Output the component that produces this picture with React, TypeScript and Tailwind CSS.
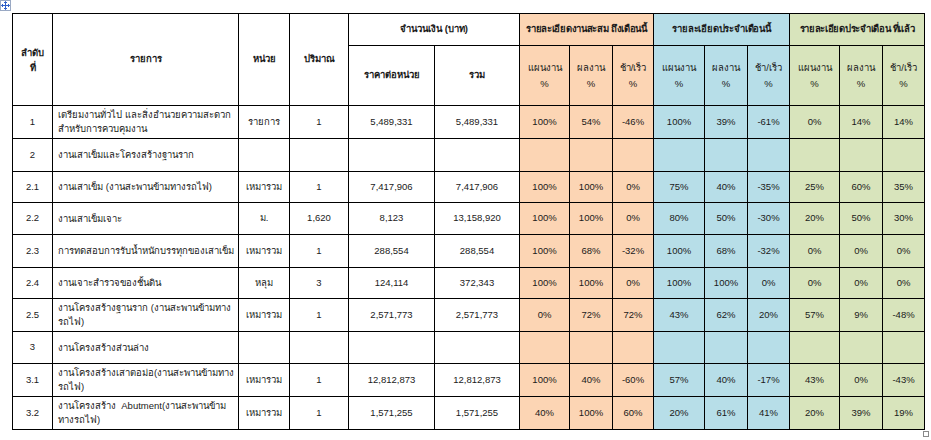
import React from "react"

type Row = {
  no: string
  name: React.ReactNode
  unit?: string
  qty?: string
  price?: string
  total?: string
  a?: string[]
  b?: string[]
  c?: string[]
  h: string
}

const rows: Row[] = [
  {
    no: "1",
    name: (
      <>
        เตรียมงานทั่วไป และสิ่งอำนวยความสะดวก
        <br />
        สำหรับการควบคุมงาน
      </>
    ),
    unit: "รายการ",
    qty: "1",
    price: "5,489,331",
    total: "5,489,331",
    a: ["100%", "54%", "-46%"],
    b: ["100%", "39%", "-61%"],
    c: ["0%", "14%", "14%"],
    h: "h-[33px]",
  },
  { no: "2", name: "งานเสาเข็มและโครงสร้างฐานราก", h: "h-[33px]" },
  {
    no: "2.1",
    name: "งานเสาเข็ม (งานสะพานข้ามทางรถไฟ)",
    unit: "เหมารวม",
    qty: "1",
    price: "7,417,906",
    total: "7,417,906",
    a: ["100%", "100%", "0%"],
    b: ["75%", "40%", "-35%"],
    c: ["25%", "60%", "35%"],
    h: "h-[31px]",
  },
  {
    no: "2.2",
    name: "งานเสาเข็มเจาะ",
    unit: "ม.",
    qty: "1,620",
    price: "8,123",
    total: "13,158,920",
    a: ["100%", "100%", "0%"],
    b: ["80%", "50%", "-30%"],
    c: ["20%", "50%", "30%"],
    h: "h-[32px]",
  },
  {
    no: "2.3",
    name: "การทดสอบการรับน้ำหนักบรรทุกของเสาเข็ม",
    unit: "เหมารวม",
    qty: "1",
    price: "288,554",
    total: "288,554",
    a: ["100%", "68%", "-32%"],
    b: ["100%", "68%", "-32%"],
    c: ["0%", "0%", "0%"],
    h: "h-[33px]",
  },
  {
    no: "2.4",
    name: "งานเจาะสำรวจของชั้นดิน",
    unit: "หลุม",
    qty: "3",
    price: "124,114",
    total: "372,343",
    a: ["100%", "100%", "0%"],
    b: ["100%", "100%", "0%"],
    c: ["0%", "0%", "0%"],
    h: "h-[31px]",
  },
  {
    no: "2.5",
    name: (
      <>
        งานโครงสร้างฐานราก (งานสะพานข้ามทาง
        <br />
        รถไฟ)
      </>
    ),
    unit: "เหมารวม",
    qty: "1",
    price: "2,571,773",
    total: "2,571,773",
    a: ["0%", "72%", "72%"],
    b: ["43%", "62%", "20%"],
    c: ["57%", "9%", "-48%"],
    h: "h-[33px]",
  },
  { no: "3", name: "งานโครงสร้างส่วนล่าง", h: "h-[32px]" },
  {
    no: "3.1",
    name: (
      <>
        งานโครงสร้างเสาตอม่อ(งานสะพานข้ามทาง
        <br />
        รถไฟ)
      </>
    ),
    unit: "เหมารวม",
    qty: "1",
    price: "12,812,873",
    total: "12,812,873",
    a: ["100%", "40%", "-60%"],
    b: ["57%", "40%", "-17%"],
    c: ["43%", "0%", "-43%"],
    h: "h-[33px]",
  },
  {
    no: "3.2",
    name: (
      <>
        งานโครงสร้าง&nbsp; Abutment(งานสะพานข้าม
        <br />
        ทางรถไฟ)
      </>
    ),
    unit: "เหมารวม",
    qty: "1",
    price: "1,571,255",
    total: "1,571,255",
    a: ["40%", "100%", "60%"],
    b: ["20%", "61%", "41%"],
    c: ["20%", "39%", "19%"],
    h: "h-[33px]",
  },
]

const widths = [40, 186, 51, 59, 86, 85, 50, 43, 41, 51, 43, 42, 50, 43, 42]

const cell = "border border-black text-center align-middle p-0"
const orange = "bg-[#fcd5b4]"
const blue = "bg-[#b7dee8]"
const green = "bg-[#d8e4bc]"

function PctHead({ label, bg }: { label: string; bg: string }) {
  return (
    <td className={`${cell} ${bg} leading-[16px]`}>
      {label}
      <br />%
    </td>
  )
}

function Group({ vals, bg }: { vals?: string[]; bg: string }) {
  const v = vals ?? ["", "", ""]
  return (
    <>
      {v.map((x, i) => (
        <td key={i} className={`${cell} ${bg}`}>
          {x}
        </td>
      ))}
    </>
  )
}

export default function App() {
  return (
    <div
      className="relative w-[931px] h-[440px] bg-white text-[#1a1a1a] text-[9.5px] pt-[13px] pl-[12px]"
      style={{ fontFamily: "'Liberation Sans', 'Noto Sans', sans-serif" }}
    >
      {/* move handle */}
      <div className="absolute left-0 top-0 w-[11px] h-[11px] border border-[#9aa9c4] bg-white flex items-center justify-center">
        <svg width="9" height="9" viewBox="0 0 9 9" fill="none" stroke="#2f5fc8" strokeWidth="1">
          <path d="M4.5 0.5v8M0.5 4.5h8" />
          <path d="M3 2l1.5-1.5L6 2M3 7l1.5 1.5L6 7M2 3L0.5 4.5 2 6M7 3l1.5 1.5L7 6" />
        </svg>
      </div>

      <table className="border-collapse table-fixed w-[913px]">
        <colgroup>
          {widths.map((w, i) => (
            <col key={i} style={{ width: w }} />
          ))}
        </colgroup>
        <thead>
          <tr className="h-[32px]">
            <td rowSpan={2} className={`${cell} font-bold leading-[15px]`}>
              ลำดับ
              <br />
              ที่
            </td>
            <td rowSpan={2} className={`${cell} font-bold`}>รายการ</td>
            <td rowSpan={2} className={`${cell} font-bold`}>หน่วย</td>
            <td rowSpan={2} className={`${cell} font-bold`}>ปริมาณ</td>
            <td colSpan={2} className={`${cell} font-bold`}>จำนวนเงิน (บาท)</td>
            <td colSpan={3} className={`${cell} ${orange} font-bold tracking-[-0.3px] whitespace-nowrap`}>
              รายละเอียดงานสะสม ถึงเดือนนี้
            </td>
            <td colSpan={3} className={`${cell} ${blue} font-bold tracking-[-0.2px]`}>รายละเอียดประจำเดือนนี้</td>
            <td colSpan={3} className={`${cell} ${green} font-bold tracking-[-0.3px] whitespace-nowrap`}>
              รายละเอียดประจำเดือน ที่แล้ว
            </td>
          </tr>
          <tr className="h-[60px]">
            <td className={`${cell} font-bold`}>ราคาต่อหน่วย</td>
            <td className={`${cell} font-bold`}>รวม</td>
            <PctHead label="แผนงาน" bg={orange} />
            <PctHead label="ผลงาน" bg={orange} />
            <PctHead label="ช้า/เร็ว" bg={orange} />
            <PctHead label="แผนงาน" bg={blue} />
            <PctHead label="ผลงาน" bg={blue} />
            <PctHead label="ช้า/เร็ว" bg={blue} />
            <PctHead label="แผนงาน" bg={green} />
            <PctHead label="ผลงาน" bg={green} />
            <PctHead label="ช้า/เร็ว" bg={green} />
          </tr>
        </thead>
        <tbody>
          {rows.map((r) => (
            <tr key={r.no} className={r.h}>
              <td className={cell}>{r.no}</td>
              <td className="border border-black text-left align-middle pl-[5px] pr-1 leading-[14px] whitespace-nowrap">
                {r.name}
              </td>
              <td className={cell}>{r.unit}</td>
              <td className={cell}>{r.qty}</td>
              <td className={cell}>{r.price}</td>
              <td className={cell}>{r.total}</td>
              <Group vals={r.a} bg={orange} />
              <Group vals={r.b} bg={blue} />
              <Group vals={r.c} bg={green} />
            </tr>
          ))}
        </tbody>
      </table>

      {/* resize handle */}
      <div className="absolute left-[923px] top-[431px] w-[6px] h-[6px] border border-[#8a8a8a] bg-white" />
    </div>
  )
}
